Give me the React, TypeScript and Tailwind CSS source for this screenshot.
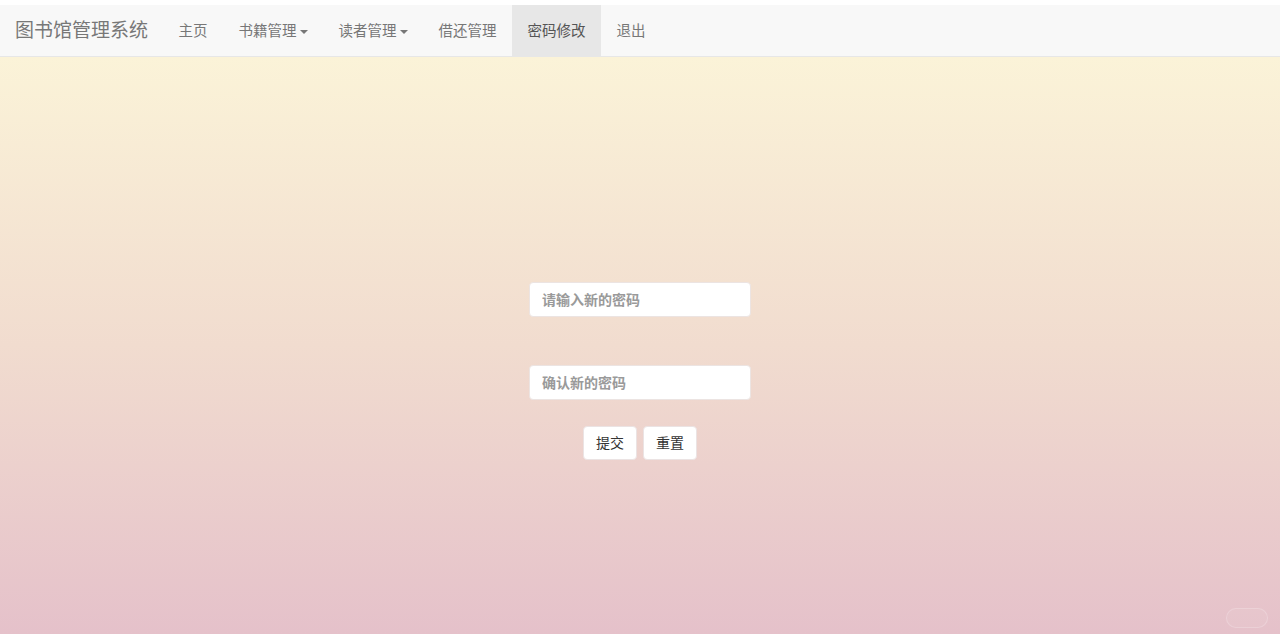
import { useState } from "react";

const navItems = [
  { label: "主页" },
  { label: "书籍管理", caret: true },
  { label: "读者管理", caret: true },
  { label: "借还管理" },
  { label: "密码修改", active: true },
  { label: "退出" },
];

function Caret() {
  return <span className="ml-[3px] inline-block w-0 h-0 border-x-[4px] border-x-transparent border-t-[4px] border-t-[#777] align-middle" />;
}

export default function App() {
  const [pwd, setPwd] = useState("");
  const [confirm, setConfirm] = useState("");

  return (
    <div
      className="w-[1280px] h-[640px] bg-white pt-[5px] pb-[6px] flex flex-col overflow-hidden"
      style={{ fontFamily: '"Helvetica Neue", "Liberation Sans", "Noto Sans CJK SC", sans-serif' }}
    >
      <nav className="h-[52px] shrink-0 bg-[#f8f8f8] border-b border-[#e7e7e7] flex items-stretch">
        <div className="pl-[15px] pr-[15px] pt-[2px] flex items-center text-[19px] text-[#777]">图书馆管理系统</div>
        <ul className="flex items-stretch">
          {navItems.map((item) => (
            <li
              key={item.label}
              className={
                item.active
                  ? "px-[15.5px] pt-[2px] flex items-center text-[14.5px] text-[#555] bg-[#e7e7e7]"
                  : "px-[15.5px] pt-[2px] flex items-center text-[14.5px] text-[#777]"
              }
            >
              {item.label}
              {item.caret && <Caret />}
            </li>
          ))}
        </ul>
      </nav>

      <main className="relative flex-1 bg-gradient-to-b from-[#fbf3d8] via-[#f1dccf] to-[#e5c1ca] flex flex-col items-center pt-[225px]">
        <input
          type="password"
          value={pwd}
          onChange={(e) => setPwd(e.target.value)}
          placeholder="请输入新的密码"
          className="w-[222px] h-[35px] rounded-[4px] bg-white border border-[#ece4e2] px-[12px] text-[14px] font-semibold text-[#555] placeholder:text-[#9a9a9a] outline-none"
        />
        <input
          type="password"
          value={confirm}
          onChange={(e) => setConfirm(e.target.value)}
          placeholder="确认新的密码"
          className="mt-[48px] w-[222px] h-[35px] rounded-[4px] bg-white border border-[#ece4e2] px-[12px] text-[14px] font-semibold text-[#555] placeholder:text-[#9a9a9a] outline-none"
        />
        <div className="mt-[26px] flex gap-[6px]">
          <button className="w-[54px] h-[34px] rounded-[4px] bg-white border border-[#ebe3e3] text-[14px] text-[#333]">提交</button>
          <button
            onClick={() => {
              setPwd("");
              setConfirm("");
            }}
            className="w-[54px] h-[34px] rounded-[4px] bg-white border border-[#ebe3e3] text-[14px] text-[#333]"
          >
            重置
          </button>
        </div>
        <div className="absolute right-[12px] bottom-[6px] w-[42px] h-[20px] rounded-full border border-white/20 bg-white/5" />
      </main>
    </div>
  );
}
